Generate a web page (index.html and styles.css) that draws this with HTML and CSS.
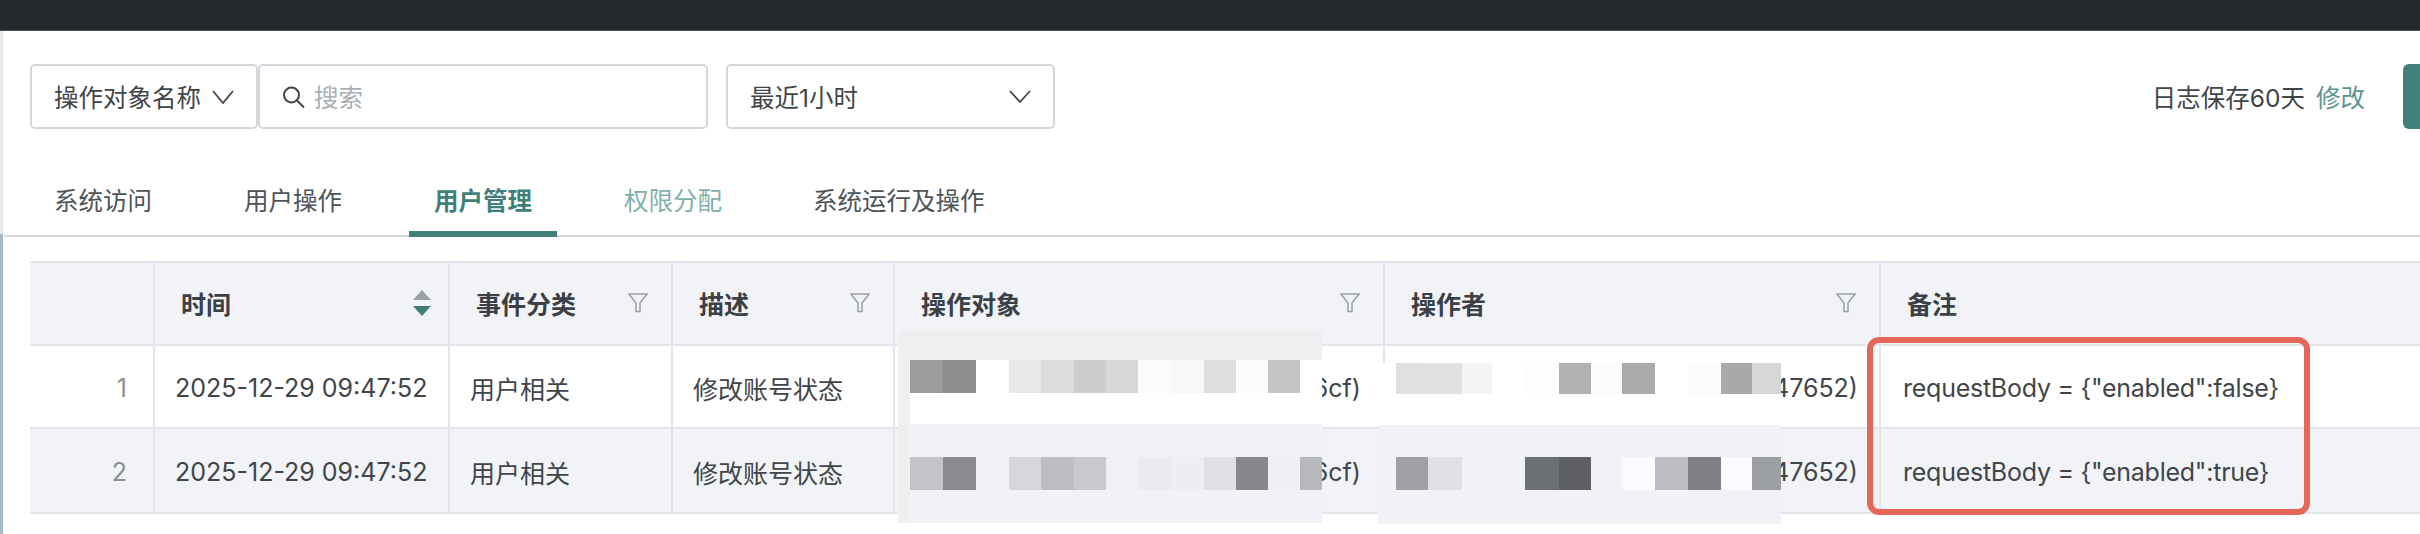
FILE: index.html
```html
<!DOCTYPE html>
<html lang="zh-CN">
<head>
    <meta charset="UTF-8">
    <title>操作日志</title>
    <link rel="stylesheet" href="styles.css">
</head>
<body>
    <div class="topbar"></div>
    <div class="main">
        <div class="toolbar">
            <div class="search-group">
                <div class="select-box field-type">
                    <span>操作对象名称</span>
                    <svg class="chevron" width="22" height="14" viewBox="0 0 22 14"><path d="M1 1l10 12L21 1"/></svg>
                </div>
                <div class="search-box">
                    <svg class="search-icon" width="24" height="22" viewBox="0 0 24 22"><circle cx="9.500" cy="9" r="7.500"/><path d="M15 14.500l7 7"/></svg>
                    <span class="placeholder">搜索</span>
                </div>
            </div>
            <div class="select-box field-time">
                <span>最近1小时</span>
                <svg class="chevron" width="22" height="14" viewBox="0 0 22 14"><path d="M1 1l10 11L21 1"/></svg>
            </div>
            <div class="retention">日志保存60天<a class="link">修改</a></div>
            <div class="green-btn"></div>
        </div>

        <div class="tabs">
            <div class="tab">系统访问</div>
            <div class="tab">用户操作</div>
            <div class="tab active">用户管理</div>
            <div class="tab muted">权限分配</div>
            <div class="tab">系统运行及操作</div>
        </div>

        <div class="table-wrap">
            <table class="log-table">
                <colgroup>
                    <col class="col-no">
                    <col class="col-time">
                    <col class="col-type">
                    <col class="col-desc">
                    <col class="col-target">
                    <col class="col-user">
                    <col class="col-note">
                </colgroup>
                <thead>
                    <tr>
                        <th></th>
                        <th class="sorted">
                            <div class="th-inner">时间
                                <svg class="sort-icon" width="18" height="26" viewBox="0 0 18 26"><path class="up" d="M9 0l9 10H0z"/><path class="down" d="M0 16h18l-9 10z"/></svg>
                            </div>
                        </th>
                        <th><div class="th-inner">事件分类 <svg class="filter-icon" width="20" height="20" viewBox="0 0 20 20"><path d="M1 1h18l-7 9v8.500h-4V10z"/></svg></div></th>
                        <th><div class="th-inner">描述 <svg class="filter-icon" width="20" height="20" viewBox="0 0 20 20"><path d="M1 1h18l-7 9v8.500h-4V10z"/></svg></div></th>
                        <th><div class="th-inner">操作对象 <svg class="filter-icon" width="20" height="20" viewBox="0 0 20 20"><path d="M1 1h18l-7 9v8.500h-4V10z"/></svg></div></th>
                        <th><div class="th-inner">操作者 <svg class="filter-icon" width="20" height="20" viewBox="0 0 20 20"><path d="M1 1h18l-7 9v8.500h-4V10z"/></svg></div></th>
                        <th><div class="th-inner">备注</div></th>
                    </tr>
                </thead>
                <tbody>
                    <tr>
                        <td class="no">1</td>
                        <td>2025-12-29 09:47:52</td>
                        <td>用户相关</td>
                        <td>修改账号状态</td>
                        <td class="end">6cf)</td>
                        <td class="end">47652)</td>
                        <td class="note">requestBody = {"enabled":false}</td>
                    </tr>
                    <tr class="alt">
                        <td class="no">2</td>
                        <td>2025-12-29 09:47:52</td>
                        <td>用户相关</td>
                        <td>修改账号状态</td>
                        <td class="end">6cf)</td>
                        <td class="end">47652)</td>
                        <td class="note">requestBody = {"enabled":true}</td>
                    </tr>
                </tbody>
            </table>

            <!-- redacted parts of the screenshot -->
            <div class="patch patch-target">
                <div class="px px-a1"></div>
                <div class="px px-a2"></div>
            </div>
            <div class="patch patch-user">
                <div class="px px-b1"></div>
                <div class="px px-b2"></div>
            </div>

            <div class="highlight"></div>
        </div>
    </div>
</body>
</html>
```

FILE: styles.css
```css
* {
    margin: 0;
    padding: 0;
    box-sizing: border-box;
}

body {
    width: 2420px;
    height: 534px;
    overflow: hidden;
    background-color: #fff;
    font-family: Inter, "Noto Sans CJK SC", sans-serif;
    font-size: 25px;
    color: #3f4549;
}

.topbar {
    height: 31px;
    background-color: #24292c;
    border-bottom: 1px solid #4a4e50;
}

.main {
    height: 503px;
    padding: 33px 0 0 4px;
    background: linear-gradient(to bottom, #e6e9ef 203px, #a9b8c9 203px) no-repeat left top / 3px 100%;
}

/* toolbar */
.toolbar {
    display: flex;
    align-items: center;
    height: 65px;
    padding-left: 26px;
    font-size: 24.5px;
}

.search-group {
    display: flex;
    height: 100%;
}

.select-box,
.search-box {
    display: flex;
    align-items: center;
    height: 100%;
    border: 2px solid #d3d8de;
    border-radius: 5px;
}

.select-box {
    justify-content: space-between;
    padding: 0 22px 0 22px;
}

.field-type {
    width: 228px;
}

.field-time {
    width: 329px;
    margin-left: 18px;
}

.search-box {
    width: 450px;
    padding-left: 22px;
}

.chevron {
    fill: none;
    stroke: #3f4549;
    stroke-width: 1.8;
}

.search-icon {
    margin-right: 8px;
    fill: none;
    stroke: #3f4549;
    stroke-width: 2;
}

.placeholder {
    color: #a9afb4;
}

.retention {
    margin-left: auto;
    margin-right: 38px;
}

.link {
    margin-left: 11px;
    color: #5b9590;
}

.green-btn {
    width: 17px;
    height: 100%;
    background-color: #417f7b;
    border-radius: 6px 0 0 6px;
}

/* tabs */
.tabs {
    display: flex;
    gap: 42px;
    height: 76px;
    margin-top: 32px;
    padding-left: 25px;
    border-bottom: 2px solid #d3d8de;
    font-size: 24.5px;
}

.tab {
    width: 148px;
    height: 76px;
    padding-top: 22px;
    line-height: 36px;
    text-align: center;
    color: #4d5357;
}

.tab:last-child {
    width: auto;
    padding-left: 24px;
}

.tab.active {
    font-weight: 600;
    color: #417f7b;
    border-bottom: 6px solid #417f7b;
}

.tab.muted {
    color: #7fb0ab;
}

/* table */
.table-wrap {
    position: relative;
    margin: 24px 0 0 26px;
}

.log-table {
    width: 2390px;
    table-layout: fixed;
    border-collapse: collapse;
}

.col-no { width: 124px; }
.col-time { width: 295px; }
.col-type { width: 223px; }
.col-desc { width: 222px; }
.col-target { width: 490px; }
.col-user { width: 496px; }
.col-note { width: 540px; }

.log-table th,
.log-table td {
    height: 83px;
    border: 2px solid #e1e4ea;
}

.log-table th:last-child,
.log-table td:last-child {
    border-right: none;
}

.log-table th:first-child,
.log-table td:first-child {
    border-left: none;
}

.log-table th {
    padding: 0 23px 2px 26px;
    background-color: #f1f3f7;
    font-weight: 600;
    text-align: left;
    color: #3a4045;
}

.log-table th.sorted {
    padding-right: 17px;
}

.log-table td {
    padding: 2px 22px 0 20px;
    white-space: nowrap;
    overflow: hidden;
}

.log-table .alt td {
    height: 85px;
    background-color: #f1f3f7;
}

.log-table td.no {
    padding-right: 26px;
    text-align: right;
    color: #8a8f94;
}

.log-table td.end {
    padding-right: 22px;
    text-align: right;
}

.log-table td.end + td.end {
    padding-right: 21px;
}

.log-table td.note {
    padding-left: 22px;
    letter-spacing: -0.25px;
}

.th-inner {
    display: flex;
    align-items: center;
    justify-content: space-between;
}

.sort-icon .up {
    fill: #9aa0a5;
}

.sort-icon .down {
    fill: #3f7f7a;
}

.filter-icon {
    fill: none;
    stroke: #9aa0a5;
    stroke-width: 1.5;
}

/* mosaic over the names */
.patch {
    position: absolute;
}

.px {
    height: 33px;
}

.patch-target {
    left: 868px;
    top: 69px;
    width: 424px;
    height: 193px;
    padding: 30px 0 0 12px;
    background:
        linear-gradient(to bottom, #efeff1 30px, transparent 30px),
        linear-gradient(to right, #efeff1 12px, transparent 12px),
        linear-gradient(to bottom, #fff 94px, #f1f2f6 94px);
}

.patch-user {
    left: 1348px;
    top: 102px;
    width: 403px;
    height: 161px;
    padding-left: 18px;
    background: linear-gradient(to bottom, #fff 62px, #f1f2f6 62px);
}

.px-a1 {
    background: linear-gradient(to right,
        #9d9d9d 33px, #8f8f8f 33px 66px, #fff 66px 99px, #e9e9e9 99px 131px,
        #dcdcde 131px 164px, #cdcdcd 164px 196px, #d6d8d8 196px 228px, #fcfcfe 228px 261px,
        #f7f8f8 261px 294px, #dddee0 294px 326px, #fbfcfe 326px 358px, #c4c5c7 358px 390px, #fff 390px);
}

.px-a2 {
    margin-top: 64px;
    background: linear-gradient(to right,
        #c4c3c8 33px, #8b8b8f 33px 66px, #f1f2f6 66px 99px, #d6d7db 99px 131px,
        #bdbec2 131px 164px, #c8c9cd 164px 196px, #f0f0f5 196px 228px, #eaebef 228px 261px,
        #edeef2 261px 294px, #e0e1e5 294px 326px, #87888c 326px 358px, #eff0f4 358px 390px, #b7b8bc 390px);
}

.px-b1 {
    height: 31px;
    background: linear-gradient(to right,
        #e0e0e0 32px, #e1e1e1 32px 66px, #f5f5f5 66px 96px, #fff 96px 129px,
        #fcfdfd 129px 163px, #b0b2b1 163px 195px, #fafcfb 195px 226px, #aaacab 226px 259px,
        #fff 259px 292px, #fbfbfb 292px 325px, #a9a9a9 325px 356px, #d6d8d7 356px);
}

.px-b2 {
    margin-top: 63px;
    background: linear-gradient(to right,
        #a0a1a5 32px, #e0e1e5 32px 66px, #f1f2f6 66px 129px, #6d7073 129px 163px,
        #5f6064 163px 195px, #f1f2f6 195px 226px, #fbfbff 226px 259px, #bcbdc1 259px 292px,
        #808185 292px 325px, #fbfbff 325px 356px, #9da0a3 356px);
}

/* red box drawn on the screenshot */
.highlight {
    position: absolute;
    left: 1837px;
    top: 76px;
    width: 443px;
    height: 178px;
    border: 6px solid #e4685a;
    border-radius: 12px;
}
```
